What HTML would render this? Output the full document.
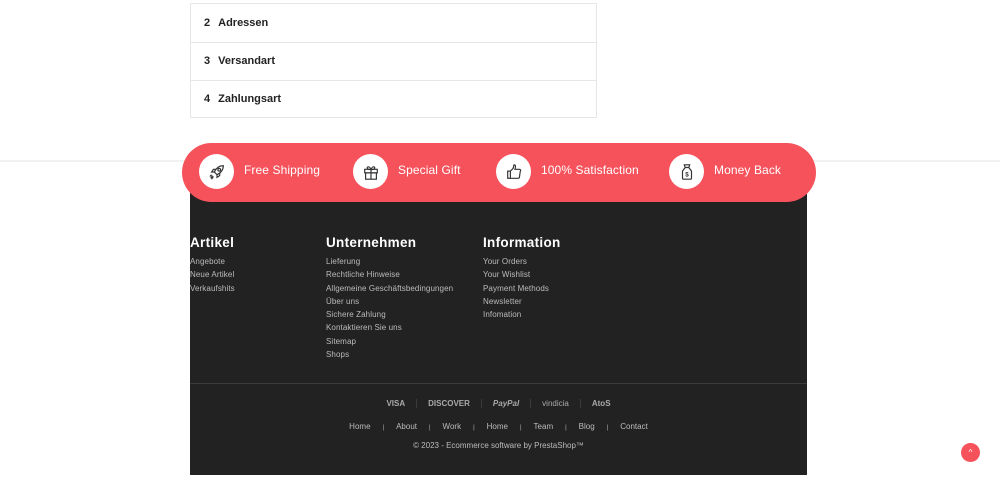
<!DOCTYPE html>
<html><head><meta charset="utf-8"><style>
*{margin:0;padding:0;box-sizing:border-box}
body{width:1000px;height:483px;background:#fff;font-family:"Liberation Sans",sans-serif;position:relative;overflow:hidden}
.step{position:absolute;left:190px;width:407px;border:1px solid #e6e6e6;font-size:11px;font-weight:bold;color:#222;padding-left:13px}
.step b{margin-right:8px}
.hr{position:absolute;left:0;right:0;top:160px;height:2px;background:#f2f2f2}
.footer{position:absolute;left:190px;top:185px;width:617px;height:290px;background:#222;color:#ccc}
.banner{position:absolute;left:182px;top:143px;width:634px;height:59px;background:#f5525c;border-radius:30px}
.circ{position:absolute;top:11px;width:35px;height:35px;border-radius:50%;background:#fff;display:flex;align-items:center;justify-content:center}
.bt{position:absolute;top:20px;color:#fff;font-size:12px;letter-spacing:.1px}
.col{position:absolute;top:50px}
.col h3{color:#fff;font-size:13.5px;font-weight:bold;margin-bottom:5px;letter-spacing:.3px}
.col div{font-size:8px;line-height:13.3px;color:#bbb;letter-spacing:.1px}
.line{position:absolute;left:0;right:0;top:198px;height:1px;background:#3c3c3c}
.pay{position:absolute;top:214px;left:0;right:0;text-align:center;font-size:8px;font-weight:bold;color:#aaa}
.pay span{display:inline-block;padding:0 11px;border-right:1px solid #3a3a3a}
.pay span:last-child{border:none}
.links{position:absolute;top:237px;left:0;right:0;text-align:center;font-size:8px;color:#bbb}
.links i{font-style:normal;margin:0 12px;font-size:6px}
.copy{position:absolute;top:256px;left:0;right:0;text-align:center;font-size:8px;color:#bbb}
.top{position:absolute;left:961px;top:443px;width:19px;height:19px;border-radius:50%;background:#f5525c;color:#fff;font-size:8px;text-align:center;line-height:19px}
</style></head><body>
<div class="step" style="top:3px;height:40px;line-height:38px"><b>2</b>Adressen</div>
<div class="step" style="top:42px;height:39px;line-height:37px"><b>3</b>Versandart</div>
<div class="step" style="top:80px;height:38px;line-height:36px"><b>4</b>Zahlungsart</div>
<div class="hr"></div>
<div class="footer">
 <div class="col" style="left:0"><h3>Artikel</h3><div>Angebote<br>Neue Artikel<br>Verkaufshits</div></div>
 <div class="col" style="left:136px"><h3>Unternehmen</h3><div>Lieferung<br>Rechtliche Hinweise<br>Allgemeine Geschäftsbedingungen<br>Über uns<br>Sichere Zahlung<br>Kontaktieren Sie uns<br>Sitemap<br>Shops</div></div>
 <div class="col" style="left:293px"><h3>Information</h3><div>Your Orders<br>Your Wishlist<br>Payment Methods<br>Newsletter<br>Infomation</div></div>
 <div class="line"></div>
 <div class="pay"><span>VISA</span><span>DISCOVER</span><span style="font-style:italic">PayPal</span><span style="font-weight:normal">vindicia</span><span>AtoS</span></div>
 <div class="links">Home<i>|</i>About<i>|</i>Work<i>|</i>Home<i>|</i>Team<i>|</i>Blog<i>|</i>Contact</div>
 <div class="copy">© 2023 - Ecommerce software by PrestaShop™</div>
</div>
<div class="banner">
 <div class="circ" style="left:17px"><svg width="18" height="18" viewBox="0 0 20 20" fill="none" stroke="#333" stroke-width="1.3"><path d="M17 3c-5 0-8 3-10 7l3 3c4-2 7-5 7-10z"/><circle cx="12.5" cy="7.5" r="1.5"/><path d="M7 10l-3 0 2-3 3 0M10 13l0 3 3-2 0-3M5 14l-2 3M6 15l-2 3M4 13l-2 2"/></svg></div>
 <div class="bt" style="left:62px">Free Shipping</div>
 <div class="circ" style="left:171px"><svg width="18" height="18" viewBox="0 0 20 20" fill="none" stroke="#333" stroke-width="1.3"><rect x="3" y="7" width="14" height="4"/><rect x="4" y="11" width="12" height="7"/><path d="M10 7v11M10 7c-2-4-5-3-4-1s4 1 4 1c2-4 5-3 4-1s-4 1-4 1"/></svg></div>
 <div class="bt" style="left:216px">Special Gift</div>
 <div class="circ" style="left:314px"><svg width="18" height="18" viewBox="0 0 20 20" fill="none" stroke="#333" stroke-width="1.3"><rect x="3" y="9" width="3" height="8"/><path d="M6 9l3-3 1-4c2 0 2 2 1 5h5c1 0 2 1 1 2l-1 7c0 1-1 1-2 1H6"/></svg></div>
 <div class="bt" style="left:359px">100% Satisfaction</div>
 <div class="circ" style="left:487px"><svg width="18" height="18" viewBox="0 0 20 20" fill="none" stroke="#333" stroke-width="1.3"><path d="M7 2h6l-1 3H8zM8 5l-3 4v8c0 1 1 1 1 1h8s1 0 1-1V9l-3-4"/><text x="10" y="15" font-size="7" text-anchor="middle" fill="#333" stroke="none" font-weight="bold">$</text></svg></div>
 <div class="bt" style="left:532px">Money Back</div>
</div>
<div class="top">^</div>
</body></html>
